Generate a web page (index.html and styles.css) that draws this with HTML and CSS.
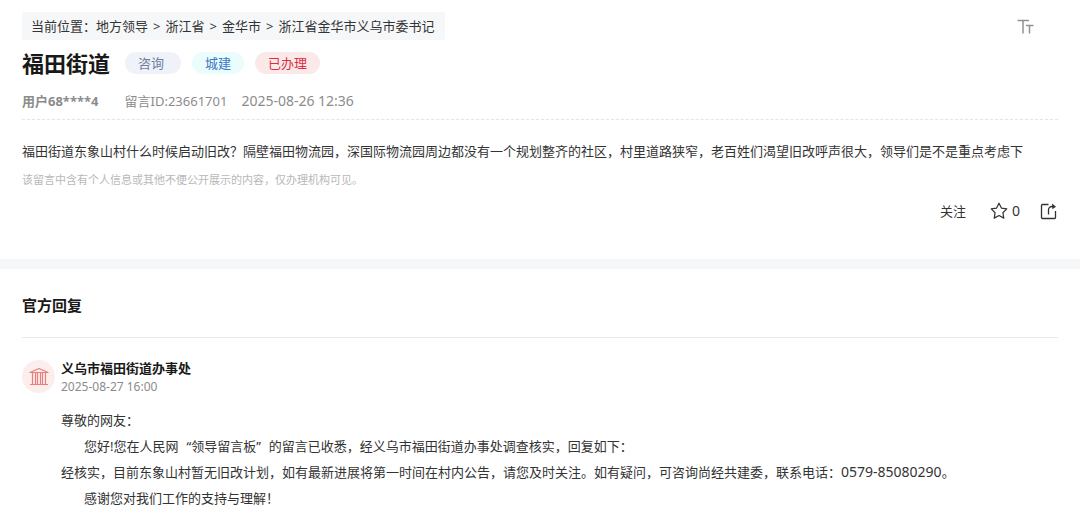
FILE: index.html
```html
<!DOCTYPE html>
<html lang="zh-CN">
<head>
<meta charset="utf-8">
<meta name="viewport" content="width=device-width, initial-scale=1">
<title>福田街道</title>
<link rel="stylesheet" href="styles.css">
</head>
<body>
<main>
  <article class="message">
    <div class="topbar">
      <nav class="breadcrumb" aria-label="当前位置">当前位置：<a href="#">地方领导</a><span class="sep">&gt;</span><a href="#">浙江省</a><span class="sep">&gt;</span><a href="#">金华市</a><span class="sep">&gt;</span><a href="#">浙江省金华市义乌市委书记</a></nav>
      <button class="font-size" type="button" aria-label="字体大小">
        <svg width="18" height="18" viewBox="0 0 18 18" fill="none" stroke="#929292" stroke-width="1.5"><path d="M.5 3.500h11.500M6 3.500v13M9 8.500h7.500M12.500 8.500v8"/></svg>
      </button>
    </div>
    <header class="title-row">
      <h1 class="title">福田街道</h1>
      <span class="tag tag-type">咨询</span>
      <span class="tag tag-field">城建</span>
      <span class="tag tag-status">已办理</span>
    </header>
    <div class="meta">
      <span class="user">用户68****4</span>
      <span class="message-id">留言ID:23661701</span>
      <time class="digits">2025-08-26 12:36</time>
    </div>
    <p class="content">福田街道东象山村什么时候启动旧改？隔壁福田物流园，深国际物流园周边都没有一个规划整齐的社区，村里道路狭窄，老百姓们渴望旧改呼声很大，领导们是不是重点考虑下</p>
    <p class="notice">该留言中含有个人信息或其他不便公开展示的内容，仅办理机构可见。</p>
    <div class="actions">
      <button class="action" type="button">关注</button>
      <button class="action star" type="button" aria-label="收藏 0">
        <svg width="18" height="18" viewBox="0 0 18 18" fill="none" stroke="#333" stroke-width="1.2" stroke-linejoin="round"><path d="M9 1.200l2.400 4.900 5.400.8-3.900 3.800.9 5.400L9 13.500l-4.800 2.600.9-5.400L1.200 6.900l5.400-.8z"/></svg>
        <span class="digits">0</span>
      </button>
      <button class="action" type="button" aria-label="分享">
        <svg width="17" height="17" viewBox="0 0 17 17" fill="none" stroke="#333" stroke-width="1.3"><path d="M8.500 1.500H2.500a1 1 0 0 0-1 1v12a1 1 0 0 0 1 1h12a1 1 0 0 0 1-1V8M8.500 11.500V7a3.500 3.500 0 0 1 3.500-3.500h2"/><path d="M12 .6l4 3.100-3.600 2.600z" fill="#333" stroke="none"/></svg>
      </button>
    </div>
  </article>
  <section class="replies">
    <h2 class="section-title">官方回复</h2>
    <article class="reply">
      <div class="avatar">
        <svg width="20" height="20" viewBox="0 0 20 20" fill="none" stroke="#e8807d" stroke-width="1.2" stroke-linejoin="round"><path d="M1 5.500L10 1.500l9 4zM1 17.500h18M3.500 6v11.500M6.500 6v11.500M8.500 6v11.500M11.500 6v11.500M13.500 6v11.500M16.500 6v11.500"/></svg>
      </div>
      <div class="reply-main">
        <h3 class="office">义乌市福田街道办事处</h3>
        <time class="reply-time">2025-08-27 16:00</time>
        <div class="reply-text">
          <p>尊敬的网友：</p>
          <p class="indent">您好!您在人民网<span class="quote">“</span>领导留言板<span class="quote close">”</span>的留言已收悉，经义乌市福田街道办事处调查核实，回复如下：</p>
          <p>经核实，目前东象山村暂无旧改计划，如有最新进展将第一时间在村内公告，请您及时关注。如有疑问，可咨询尚经共建委，联系电话：<span class="digits">0579-85080290</span>。</p>
          <p class="indent">感谢您对我们工作的支持与理解！</p>
        </div>
      </div>
    </article>
  </section>
</main>
</body>
</html>
```
FILE: styles.css
```css
* {
  box-sizing: border-box;
}

body {
  margin: 0;
  background: #fff;
  color: #333;
  font: 13px/26px "Noto Sans", "Noto Sans CJK SC", sans-serif;
}

h1, h2, h3, p {
  margin: 0;
}

a {
  color: inherit;
  text-decoration: none;
}

button {
  border: 0;
  padding: 0;
  background: none;
  color: inherit;
  font: inherit;
  cursor: pointer;
}

svg {
  display: block;
}

.digits {
  font-size: 14px;
}

.message {
  padding: 12px 22px 35px;
  border-bottom: 10px solid #f6f7f9;
}

.topbar {
  display: flex;
  align-items: center;
  justify-content: space-between;
}

.breadcrumb {
  padding: 1px 11px 1px 9px;
  border-radius: 2px;
  background: #f6f7f9;
}

.sep {
  margin: 0 5px;
}

.font-size {
  margin-right: 23px;
}

.title-row {
  display: flex;
  align-items: center;
  gap: 11px;
  padding-top: 6px;
}

.title {
  margin-right: 4px;
  color: #191919;
  font-size: 22px;
  line-height: 34px;
}

.tag {
  padding: 0 13px;
  border-radius: 11px;
  line-height: 22px;
}

.tag-type {
  padding-right: 17px;
  background: #eff3f9;
  color: #6b7f9e;
}

.tag-field {
  background: #eafcfb;
  color: #3c78c8;
}

.tag-status {
  background: #fbe9ea;
  color: #d9303e;
}

.meta {
  display: flex;
  gap: 14px;
  padding: 8px 0 5px;
  border-bottom: 1px dashed #e4e4e4;
  color: #8c8c8c;
}

.user {
  margin-right: 12px;
  font-weight: 700;
}

.content {
  padding-top: 18px;
}

.notice {
  margin-top: 4px;
  color: #b8b8b8;
  font-size: 11px;
  line-height: 24px;
}

.actions {
  display: flex;
  align-items: center;
  justify-content: flex-end;
  gap: 24px;
  padding: 6px 1px 0 0;
}

.star {
  display: flex;
  align-items: center;
  gap: 4px;
}

.action + .star + .action {
  margin-left: -4px;
}

.replies {
  padding: 0 22px 14px;
}

.section-title {
  padding: 23px 0 18px;
  border-bottom: 1px solid #eaeaea;
  color: #191919;
  font-size: 15px;
  line-height: 27px;
}

.reply {
  display: flex;
  gap: 6px;
  padding-top: 20px;
}

.avatar {
  display: flex;
  flex: none;
  align-items: center;
  justify-content: center;
  width: 33px;
  height: 33px;
  margin-top: 2px;
  border-radius: 50%;
  background: #fdeeee;
}

.office {
  color: #191919;
  font-size: 13px;
  line-height: 20px;
}

.reply-time {
  display: block;
  color: #8c8c8c;
  font-size: 12px;
  line-height: 18px;
}

.reply-text {
  padding-top: 11px;
}

.indent {
  padding-left: 23px;
}

.quote {
  margin-left: 8px;
}

.close {
  margin: 0 8px 0 0;
}
```
